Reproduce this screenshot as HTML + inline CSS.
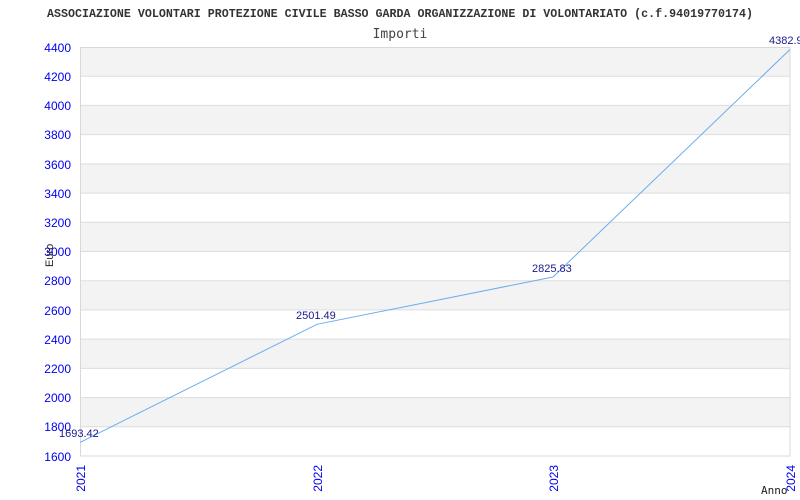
<!DOCTYPE html>
<html><head><meta charset="utf-8"><style>body{margin:0;background:#fff}svg{display:block}</style></head><body>
<svg width="800" height="500" xmlns="http://www.w3.org/2000/svg">
<rect width="800" height="500" fill="#fff"/>
<text x="47" y="17" textLength="706" lengthAdjust="spacingAndGlyphs" font-family="Liberation Mono, monospace" font-weight="bold" font-size="11.5" fill="#333">ASSOCIAZIONE VOLONTARI PROTEZIONE CIVILE BASSO GARDA ORGANIZZAZIONE DI VOLONTARIATO (c.f.94019770174)</text>
<text x="400" y="38" text-anchor="middle" font-family="DejaVu Sans Mono, monospace" font-size="13" fill="#444">Importi</text>
<g fill="#f3f3f3">
<rect x="80" y="47" width="710" height="29.2"/>
<rect x="80" y="105.4" width="710" height="29.2"/>
<rect x="80" y="163.9" width="710" height="29.2"/>
<rect x="80" y="222.3" width="710" height="29.2"/>
<rect x="80" y="280.7" width="710" height="29.2"/>
<rect x="80" y="339.1" width="710" height="29.2"/>
<rect x="80" y="397.6" width="710" height="29.2"/>
</g>
<g stroke="#ddd" stroke-width="1">
<line x1="80" x2="790" y1="76.2" y2="76.2"/><line x1="80" x2="790" y1="105.4" y2="105.4"/>
<line x1="80" x2="790" y1="134.6" y2="134.6"/><line x1="80" x2="790" y1="163.9" y2="163.9"/>
<line x1="80" x2="790" y1="193.1" y2="193.1"/><line x1="80" x2="790" y1="222.3" y2="222.3"/>
<line x1="80" x2="790" y1="251.5" y2="251.5"/><line x1="80" x2="790" y1="280.7" y2="280.7"/>
<line x1="80" x2="790" y1="309.9" y2="309.9"/><line x1="80" x2="790" y1="339.1" y2="339.1"/>
<line x1="80" x2="790" y1="368.4" y2="368.4"/><line x1="80" x2="790" y1="397.6" y2="397.6"/>
<line x1="80" x2="790" y1="426.8" y2="426.8"/>
</g>
<rect x="80.5" y="47.5" width="709.5" height="408.5" fill="none" stroke="#d8d8d8"/>
<g font-family="Liberation Sans, sans-serif" font-size="12" fill="#0000ee" text-anchor="end">
<text x="71" y="52">4400</text><text x="71" y="81">4200</text><text x="71" y="110">4000</text>
<text x="71" y="139">3800</text><text x="71" y="169">3600</text><text x="71" y="198">3400</text>
<text x="71" y="227">3200</text><text x="71" y="256">3000</text><text x="71" y="285">2800</text>
<text x="71" y="315">2600</text><text x="71" y="344">2400</text><text x="71" y="373">2200</text>
<text x="71" y="402">2000</text><text x="71" y="431">1800</text><text x="71" y="461">1600</text>
</g>
<g font-family="Liberation Sans, sans-serif" font-size="12" fill="#0000ee" text-anchor="end">
<text transform="translate(85,465) rotate(-90)">2021</text>
<text transform="translate(322,465) rotate(-90)">2022</text>
<text transform="translate(558,465) rotate(-90)">2023</text>
<text transform="translate(795,465) rotate(-90)">2024</text>
</g>
<text transform="translate(53,267) rotate(-90)" font-family="Liberation Sans, sans-serif" font-size="11" fill="#222">Euro</text>
<text x="761" y="494" font-family="DejaVu Sans Mono, monospace" font-size="11" fill="#222">Anno</text>
<polyline points="80,442.4 317,324.3 553,277 790,49.5" fill="none" stroke="#6aaef0" stroke-width="1"/>
<g font-family="Liberation Sans, sans-serif" font-size="11" fill="#1a1a8c">
<text x="59" y="437">1693.42</text>
<text x="296" y="319">2501.49</text>
<text x="532" y="272">2825.83</text>
<text x="769" y="44">4382.9</text>
</g>
</svg>
</body></html>
